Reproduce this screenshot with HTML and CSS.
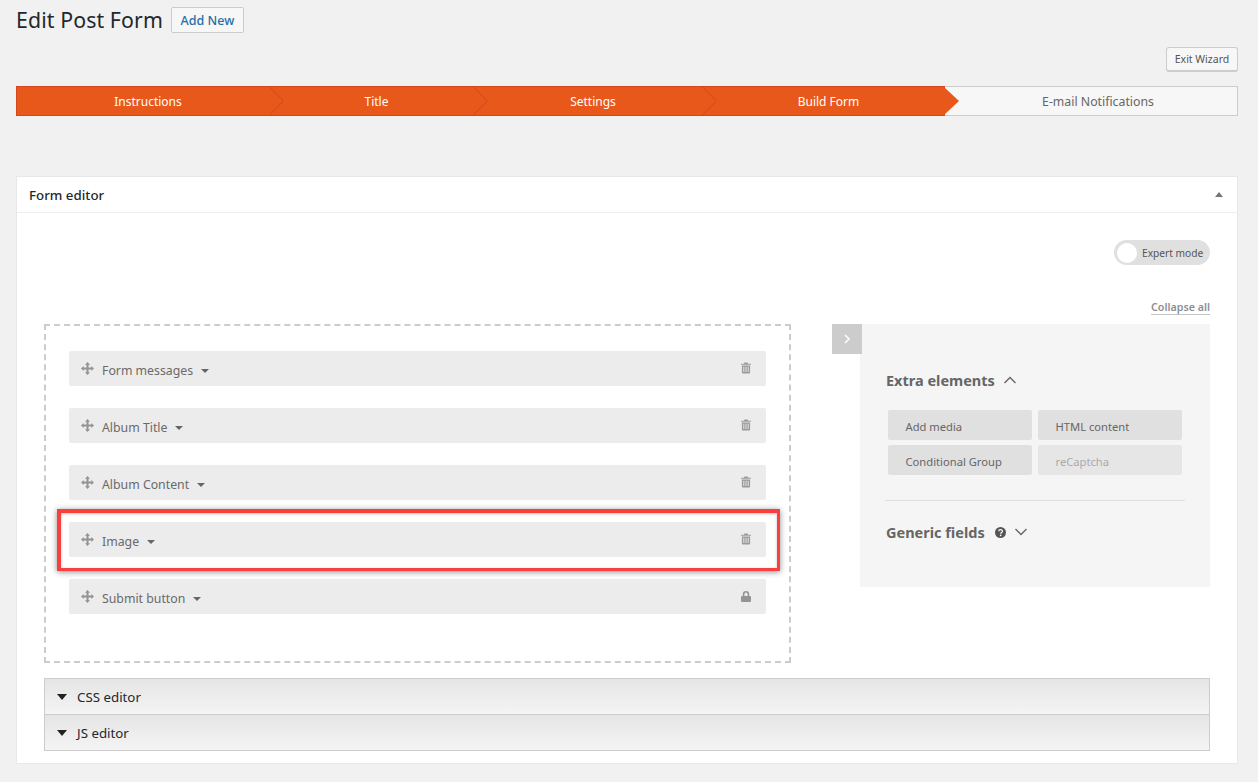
FILE: index.html
```html
<!DOCTYPE html>
<html lang="en">
<head>
<meta charset="utf-8">
<title>Edit Post Form</title>
<link rel="stylesheet" href="styles.css">
</head>
<body>
<svg class="sprites" width="0" height="0" aria-hidden="true">
  <symbol id="i-move" viewBox="0 0 14 14"><path fill="currentColor" d="M7 0l2.700 2.900H8.100v3h3V4.300L14 7l-2.900 2.700V8.100h-3v3h1.600L7 14l-2.700-2.900h1.600v-3h-3v1.600L0 7l2.900-2.700v1.600h3v-3H4.300z"/></symbol>
  <symbol id="i-trash" viewBox="0 0 11 12"><path fill="currentColor" d="M3.8 0h3.4l.6 1.2H11v1.300H0V1.200h3.200zM1 3.300h9V11a1 1 0 0 1-1 1H2a1 1 0 0 1-1-1zm1.600 1.200v6h1v-6zm2.400 0v6h1v-6zm2.400 0v6h1v-6z"/></symbol>
  <symbol id="i-lock" viewBox="0 0 10 11"><path fill="currentColor" d="M5 0a3.200 3.200 0 0 1 3.200 3.200V5H9a1 1 0 0 1 1 1v4a1 1 0 0 1-1 1H1a1 1 0 0 1-1-1V6a1 1 0 0 1 1-1h.8V3.200A3.200 3.200 0 0 1 5 0zm0 1.600a1.600 1.600 0 0 0-1.600 1.600V5h3.200V3.200A1.600 1.600 0 0 0 5 1.600z"/></symbol>
</svg>

<header class="title-row">
  <h1 class="page-title">Edit Post Form</h1>
  <a class="add-new">Add New</a>
</header>

<div class="exit-row"><a class="exit-btn">Exit Wizard</a></div>

<nav class="steps">
  <div class="step step-1 done">Instructions</div>
  <div class="step step-2 done">Title</div>
  <div class="step step-3 done">Settings</div>
  <div class="step step-4 done current">Build Form</div>
  <div class="step step-5">E-mail Notifications</div>
</nav>

<section class="panel">
  <div class="panel-head">
    <h2 class="panel-title">Form editor</h2>
    <span class="panel-caret"></span>
  </div>
  <div class="panel-body">
    <div class="mode-row">
      <div class="expert"><span class="knob"></span><span class="expert-label">Expert mode</span></div>
    </div>
    <div class="collapse-row"><a class="collapse-all">Collapse all</a></div>
    <div class="editor">
      <div class="canvas">
        <div class="field">
          <svg class="move"><use href="#i-move"/></svg><span class="field-name">Form messages</span><span class="field-caret"></span>
          <svg class="trash"><use href="#i-trash"/></svg>
        </div>
        <div class="field">
          <svg class="move"><use href="#i-move"/></svg><span class="field-name">Album Title</span><span class="field-caret"></span>
          <svg class="trash"><use href="#i-trash"/></svg>
        </div>
        <div class="field">
          <svg class="move"><use href="#i-move"/></svg><span class="field-name">Album Content</span><span class="field-caret"></span>
          <svg class="trash"><use href="#i-trash"/></svg>
        </div>
        <div class="field">
          <svg class="move"><use href="#i-move"/></svg><span class="field-name">Image</span><span class="field-caret"></span>
          <svg class="trash"><use href="#i-trash"/></svg>
        </div>
        <div class="field">
          <svg class="move"><use href="#i-move"/></svg><span class="field-name">Submit button</span><span class="field-caret"></span>
          <svg class="lock"><use href="#i-lock"/></svg>
        </div>
        <div class="highlight"></div>
      </div>
      <aside class="side">
        <span class="side-toggle"><svg width="8" height="12" viewBox="0 0 8 12"><path d="M2 2l4 4-4 4" fill="none" stroke="#fff" stroke-width="1.5"/></svg></span>
        <h3 class="side-title first">Extra elements
          <svg class="chev" width="14" height="8" viewBox="0 0 14 8"><path d="M1.5 7L7 1.5 12.500 7" fill="none" stroke="#666" stroke-width="1.4"/></svg>
        </h3>
        <div class="tiles">
          <span class="tile">Add media</span>
          <span class="tile">HTML content</span>
          <span class="tile">Conditional Group</span>
          <span class="tile off">reCaptcha</span>
        </div>
        <hr class="side-rule">
        <h3 class="side-title">Generic fields
          <svg class="help" width="11" height="11" viewBox="0 0 11 11"><circle cx="5.500" cy="5.500" r="5.500" fill="#555"/><path d="M3.700 4.300c0-2.300 3.700-2.300 3.700-.1 0 1.300-1.700 1.300-1.700 2.500" fill="none" stroke="#fff" stroke-width="1.200"/><rect x="4.900" y="7.600" width="1.500" height="1.500" fill="#fff"/></svg>
          <svg class="chev" width="14" height="8" viewBox="0 0 14 8"><path d="M1.500 1L7 6.500 12.500 1" fill="none" stroke="#666" stroke-width="1.400"/></svg>
        </h3>
      </aside>
    </div>
    <div class="accordion">
      <div class="acc-row"><span class="acc-caret"></span>CSS editor</div>
      <div class="acc-row"><span class="acc-caret"></span>JS editor</div>
    </div>
  </div>
</section>
</body>
</html>
```
FILE: styles.css
```css
* { box-sizing: border-box; }
html, body { margin: 0; padding: 0; }
body {
  width: 1258px;
  height: 782px;
  overflow: hidden;
  background: #f1f1f1;
  font-family: "Noto Sans", "Open Sans", sans-serif;
  font-size: 13px;
  color: #444;
  padding: 0 20px 0 16px;
}
.sprites { position: absolute; }

.title-row { display: flex; align-items: flex-start; height: 47px; padding-top: 7px; }
.page-title { margin: 0; font-size: 21.300px; font-weight: 400; line-height: 25px; color: #23282d; letter-spacing: .1px; }
.add-new {
  margin-left: 8px; width: 73px; height: 26px; line-height: 25px; text-align: center;
  border: 1px solid #ccc; border-radius: 2px; background: #f7f7f7; color: #1f6fa8;
  font-size: 12.500px; font-weight: 500;
}

.exit-row { display: flex; justify-content: flex-end; height: 39px; }
.exit-btn {
  width: 72px; height: 25px; line-height: 22px; text-align: center; font-size: 10.500px; color: #555;
  background: #f7f7f7; border: 1px solid #ccc; border-bottom-width: 2px; border-radius: 3px;
}

.steps { display: flex; height: 30px; position: relative; }
.step {
  position: relative; height: 30px; line-height: 29px; text-align: center; font-size: 12px;
  color: #666; background: #f7f7f7; border: 1px solid #ccc; border-left: 0;
}
.step.done { background: #e9581b; color: #fff; border-color: #d2481a; padding-left: 10px; }
.step-1 { width: 254px; border-left: 1px solid #d2481a; }
.step-2 { width: 204px; }
.step-3 { width: 229px; }
.step-4 { width: 242px; }
.step-5 { flex: 1; padding-left: 14px; font-size: 12.300px; }
.step.done::after {
  content: ""; position: absolute; z-index: 1; top: 0; right: -15px; width: 15px; height: 28px;
  background: #e9581b; clip-path: polygon(0 0, 100% 50%, 0 100%);
}
.step.done::before {
  content: ""; position: absolute; z-index: 2; top: 0; right: -14px; width: 14px; height: 28px;
  background: linear-gradient(to top right, transparent 48%, #d9501c 48%, #d9501c 54%, transparent 54%) 0 0 / 100% 50% no-repeat,
              linear-gradient(to bottom right, transparent 48%, #d9501c 48%, #d9501c 54%, transparent 54%) 0 100% / 100% 50% no-repeat;
}
.step.current::before { display: none; }

.panel {
  margin: 61px 1px 0 1px; height: 586px; background: #fff;
  box-shadow: 0 0 0 1px #e8e8e8;
}
.panel-head {
  display: flex; align-items: center; justify-content: space-between; height: 36px;
  padding: 0 14px 0 12px; border-bottom: 1px solid #eee;
}
.panel-title { margin: 0; font-size: 13.300px; font-weight: 500; color: #23282d; }
.panel-caret { width: 0; height: 0; border: 4px solid transparent; border-top: 0; border-bottom: 5px solid #72777c; }

.panel-body { padding: 0 27px; }
.mode-row { display: flex; justify-content: flex-end; padding-top: 27px; height: 87px; }
.expert {
  display: flex; align-items: center; width: 96px; height: 25px; border-radius: 13px;
  background: #e0e0e0; padding-left: 3px;
}
.knob { width: 20px; height: 20px; border-radius: 50%; background: #fff; flex: none; }
.expert-label { margin-left: 5px; font-size: 10.200px; color: #555; white-space: nowrap; }
.collapse-row { display: flex; justify-content: flex-end; height: 24px; }
.collapse-all { height: 15px; line-height: 14px; font-size: 10.700px; font-weight: 600; color: #8c8f94; border-bottom: 1px solid #c4c4c4; }

.editor { display: flex; align-items: flex-start; height: 354px; }
.canvas {
  position: relative; width: 747px; height: 339px; border: 2px dashed #ccc;
  padding: 25px 23px 0; display: flex; flex-direction: column; gap: 22px;
}
.field {
  display: flex; align-items: center; height: 35px; background: #ececec; border-radius: 2px;
  padding: 4px 14px 0 12px; color: #6a6a6a; font-size: 12.300px;
}
.move { width: 13px; height: 13px; color: #949494; flex: none; margin-top: -5px; }
.field-name { margin-left: 8px; }
.field-caret { margin-left: 8px; width: 0; height: 0; border: 4px solid transparent; border-top: 4px solid #666; border-bottom: 0; }
.trash { margin-left: auto; width: 10px; height: 12px; color: #9a9a9a; margin-top: -5px; margin-right: 1px; }
.lock { margin-left: auto; width: 10px; height: 11px; color: #949494; margin-top: -5px; margin-right: 1px; }
.highlight {
  position: absolute; left: 11px; top: 183px; width: 723px; height: 62px;
  border: 3px solid #f8403f; border-top-width: 4px; border-left-width: 4px;
  box-shadow: 0 1px 6px rgba(0,0,0,.45), inset 0 1px 3px rgba(0,0,0,.25);
}

.side { position: relative; width: 350px; height: 263px; margin-left: 69px; background: #f5f5f5; padding: 45px 25px 0 25px; }
.side-toggle {
  position: absolute; left: -28px; top: 0; width: 30px; height: 30px; background: #ccc;
  display: flex; align-items: center; justify-content: center;
}
.side-title { margin: 0; padding-left: 1px; display: flex; align-items: center; height: 22px; font-size: 14.500px; font-weight: 700; color: #666; }
.side-title .chev { margin-left: 8px; }
.side-title .help { margin-left: 10px; }
.tiles { display: grid; grid-template-columns: 144px 144px; column-gap: 6px; row-gap: 5px; margin: 19px 0 0 3px; }
.tile {
  height: 30px; line-height: 34px; padding-left: 17.500px; background: #e0e0e0; border-radius: 2px;
  font-size: 11.200px; color: #666;
}
.tile.off { color: #aaa; background: #e6e6e6; }
.side-rule { margin: 25px 0 20px; width: 300px; height: 1px; border: 0; background: #dedede; }

.accordion { border: 1px solid #ccc; }
.acc-row {
  display: flex; align-items: center; height: 35px; padding-left: 12px; font-size: 13.300px; color: #23282d;
  background: linear-gradient(#e5e5e5, #f4f4f4);
}
.acc-row + .acc-row { border-top: 1px solid #ccc; height: 36px; }
.acc-caret { width: 0; height: 0; margin-right: 10px; border: 5.500px solid transparent; border-top: 6px solid #222; border-bottom: 0; }
```
